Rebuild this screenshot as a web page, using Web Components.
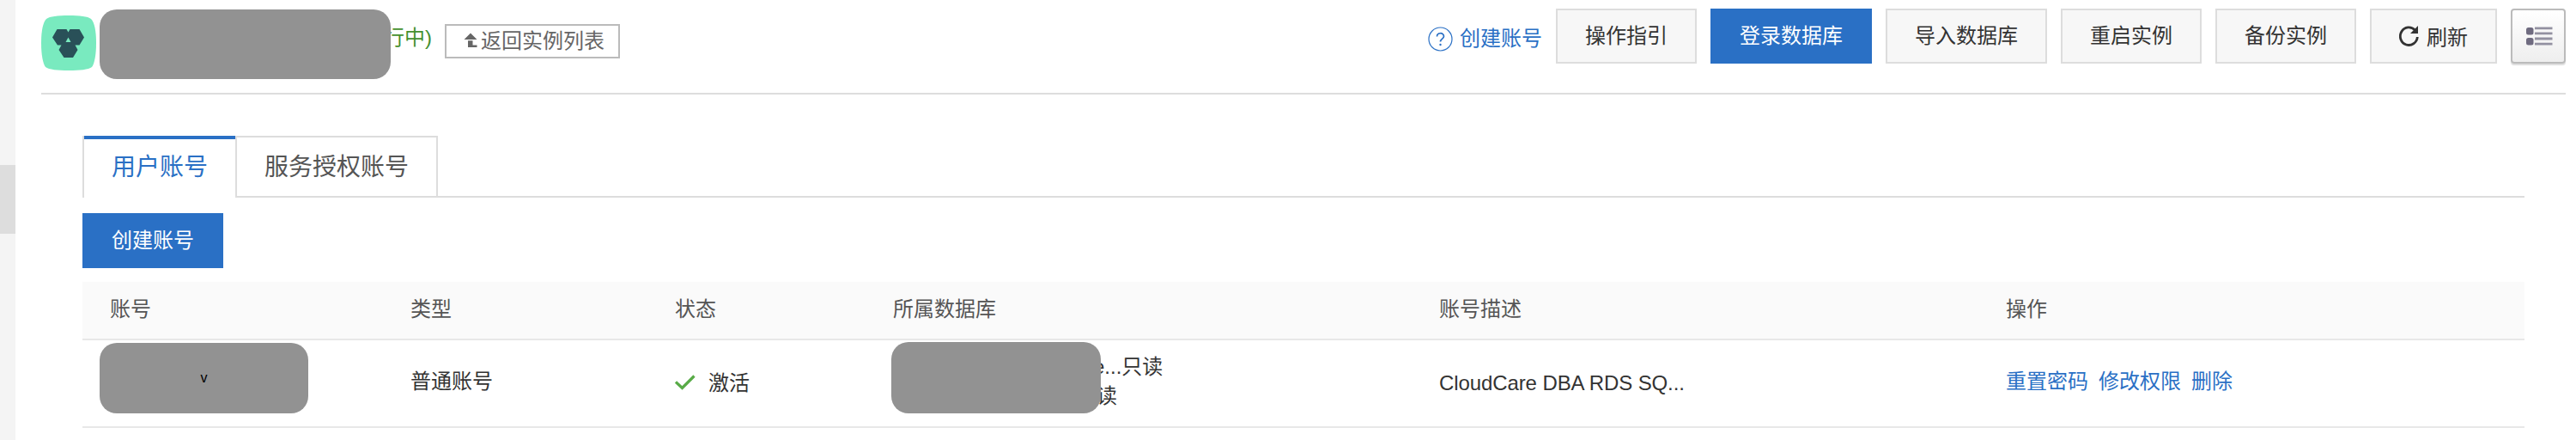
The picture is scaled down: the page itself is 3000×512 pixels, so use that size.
<!DOCTYPE html>
<html lang="zh-CN">
<head>
<meta charset="utf-8">
<title>账号管理</title>
<style>
body{margin:0;background:#fff;font:24px/36px "Liberation Sans","Noto Sans CJK SC",sans-serif;color:#333;overflow:hidden}
</style>
</head>
<body>
<rds-page></rds-page>
<script>
const define=(name,html)=>{
  const t=document.createElement('template');
  t.innerHTML=html;
  customElements.define(name,class extends HTMLElement{
    constructor(){super();this.attachShadow({mode:'open'}).append(t.content.cloneNode(true));}
  });
};

define('ui-button',`<style>
:host{display:flex;align-items:center;justify-content:center;box-sizing:border-box;height:64px;padding:0 32px;border:2px solid #ddd;background:#f7f7f7;color:#333;white-space:nowrap;flex:none}
:host([primary]){background:#2a70c5;border-color:#2a70c5;color:#fff}
</style><slot></slot>`);

define('ui-mask',`<style>
:host{display:block;background:#929292;border-radius:20px;box-sizing:border-box;color:#000;font-size:16px;text-align:center}
</style><slot></slot>`);

define('ui-tab',`<style>
:host{display:block;box-sizing:border-box;height:72px;padding:0 32px;border:solid #ddd;border-width:2px 2px 2px 0;font-size:28px;line-height:70px;color:#555}
:host([active]){border-top:4px solid #2a70c5;border-bottom-color:#fff;color:#2a70c5;line-height:66px;border-right:0}
</style><slot></slot>`);

define('side-rail',`<style>
:host{display:flex;flex-direction:column;width:18px;height:512px;background:#f4f4f4;padding-top:192px;box-sizing:border-box;flex:none}
i{height:80px;background:#ddd}
</style><i></i>`);

define('page-header',`<style>
:host{display:flex;height:110px;box-sizing:border-box;border-bottom:2px solid #ddd;align-items:flex-start}
.logo{margin-top:18px;flex:none}
ui-mask{width:339px;height:81px;margin:11px 0 0 4px;position:relative;z-index:1;flex:none}
.state{color:#45902f;margin:26px 0 0 -8px;width:71px;flex:none}
.back{display:flex;box-sizing:border-box;width:204px;height:40px;border:2px solid #bbb;color:#666;margin-top:28px;padding-left:20px;align-items:center;flex:none}
.back svg{margin-right:3px}
.tools{margin-left:auto;display:flex;gap:16px;padding-top:10px}
.help{display:flex;color:#2a70c5;height:64px;line-height:64px;padding-top:4px;box-sizing:border-box}
.help svg{margin:17px 8px 0 0}
.help span{line-height:64px;height:60px;margin-top:-1px}
.refresh{margin-right:9px}
.lbl{position:relative;top:2px}
.list{box-sizing:border-box;width:64px;height:64px;border:2px solid #bbb;border-radius:4px;background:linear-gradient(#fff,#eee);box-shadow:0 2px 1px #ddd}
.list svg{display:block}
</style>
<svg class="logo" width="64" height="64" viewBox="0 0 64 64"><path fill="#79eabf" d="M32 0C45 0 54 1 58 4 62 8 64 18 64 32S62 56 59 60C55 63 45 64 32 64S9 63 5 60C2 56 0 46 0 32S2 8 6 4C10 1 19 0 32 0Z"/><path fill="#295058" d="M18.500 16H29.500L31.500 19.500 33.500 16H44.500L50 25.500 44.500 34.500H39.500L42.500 40 37 49H26.500L20.500 40 23.500 34.500H19L13 25.500Z"/><path fill="#79eabf" d="M31.500 25.500L34.500 31H28.500Z"/></svg>
<ui-mask></ui-mask>
<span class="state">行中)</span>
<div class="back"><svg width="17" height="20" viewBox="0 0 17 20"><path fill="#666" d="M8 .500L15.500 8H.500ZM5 9.300H10.500V14.500H15.500V17H5Z"/></svg>返回实例列表</div>
<div class="tools">
<div class="help"><svg width="29" height="29" viewBox="0 0 29 29"><circle cx="14.500" cy="14.500" r="13.500" fill="none" stroke="#2a70c5" stroke-width="1.200"/><path d="M10.500 11.500C10.500 6.500 18.500 6.500 18.500 11.300 18.500 14 14.500 14.200 14.500 17.500" fill="none" stroke="#2a70c5" stroke-width="1.700"/><circle cx="14.500" cy="21" r="1.200" fill="#2a70c5"/></svg><span>创建账号</span></div>
<ui-button>操作指引</ui-button><ui-button primary>登录数据库</ui-button><ui-button>导入数据库</ui-button><ui-button>重启实例</ui-button><ui-button>备份实例</ui-button>
<ui-button><svg class="refresh" width="23" height="24" viewBox="0 0 23 24"><path d="M18.500 5A10 10.300 0 1 0 21.300 13" fill="none" stroke="#333" stroke-width="2.800"/><path d="M22 0V9H13Z" fill="#333"/></svg><span class="lbl">刷新</span></ui-button>
<div class="list"><svg width="60" height="60"><g fill="#6f6b80"><rect x="16" y="20" width="8.500" height="8.500" rx="2.500"/><rect x="16" y="32" width="8.500" height="8.500" rx="2.500"/></g><path d="M26 20.800H46.500M26 26.800H46.500M26 33H46.500M26 39.200H46.500" stroke="#9391a1" stroke-width="2.800"/></svg></div>
</div>`);

define('tab-bar',`<style>
:host{display:flex;height:72px;background:linear-gradient(#ddd,#ddd) 0 70px/100% 2px no-repeat}
i{width:2px;background:#ddd}
</style><i></i><ui-tab active>用户账号</ui-tab><i></i><ui-tab>服务授权账号</ui-tab>`);

define('account-table',`<style>
:host{display:block}
.r{display:grid;grid-template-columns:382px 308px 254px 636px 660px 1fr;box-sizing:border-box}
.h{height:68px;background:#fafafa;border-bottom:2px solid #e8e8e8;color:#555;line-height:64px}
.h>:first-child{padding-left:32px}
.b{height:102px;border-bottom:2px solid #e8e8e8;line-height:96px}
.acct{width:243px;height:82px;margin:3px 0 0 20px;line-height:81px}
.st{display:flex;line-height:100px}
.st svg{margin:40px 15px 0 0}
.db{display:flex}
.db ui-mask{width:244px;height:83px;margin:2px 0 0 -2px;position:relative;z-index:1;flex:none}
.db div{line-height:34px;padding-top:14px;margin-left:-9px}
.db p{margin:0}.db p+p{margin-left:4px}
.d{line-height:100px;letter-spacing:-.1px}
.ops{display:flex;gap:12px;color:#2a70c5}
</style>
<div class="r h"><div>账号</div><div>类型</div><div>状态</div><div>所属数据库</div><div>账号描述</div><div>操作</div></div>
<div class="r b"><div><ui-mask class="acct">v</ui-mask></div><div>普通账号</div>
<div class="st"><svg width="24" height="18" viewBox="0 0 24 18"><path d="M1 8.500L8.500 15.500 22.500 1.500" fill="none" stroke="#58ab47" stroke-width="3.200"/></svg>激活</div>
<div class="db"><ui-mask></ui-mask><div><p>e...只读</p><p>读</p></div></div>
<div class="d">CloudCare DBA RDS SQ...</div>
<div class="ops"><span>重置密码</span><span>修改权限</span><span>删除</span></div></div>`);

define('rds-page',`<style>
:host{display:flex;height:512px}
main{width:2940px;margin-left:30px}
section{margin:48px 48px 0 48px}
.bar{display:flex;margin:18px 0 16px}
</style>
<side-rail></side-rail>
<main><page-header></page-header>
<section><tab-bar></tab-bar><div class="bar"><ui-button primary>创建账号</ui-button></div><account-table></account-table></section></main>`);
</script>
</body>
</html>
